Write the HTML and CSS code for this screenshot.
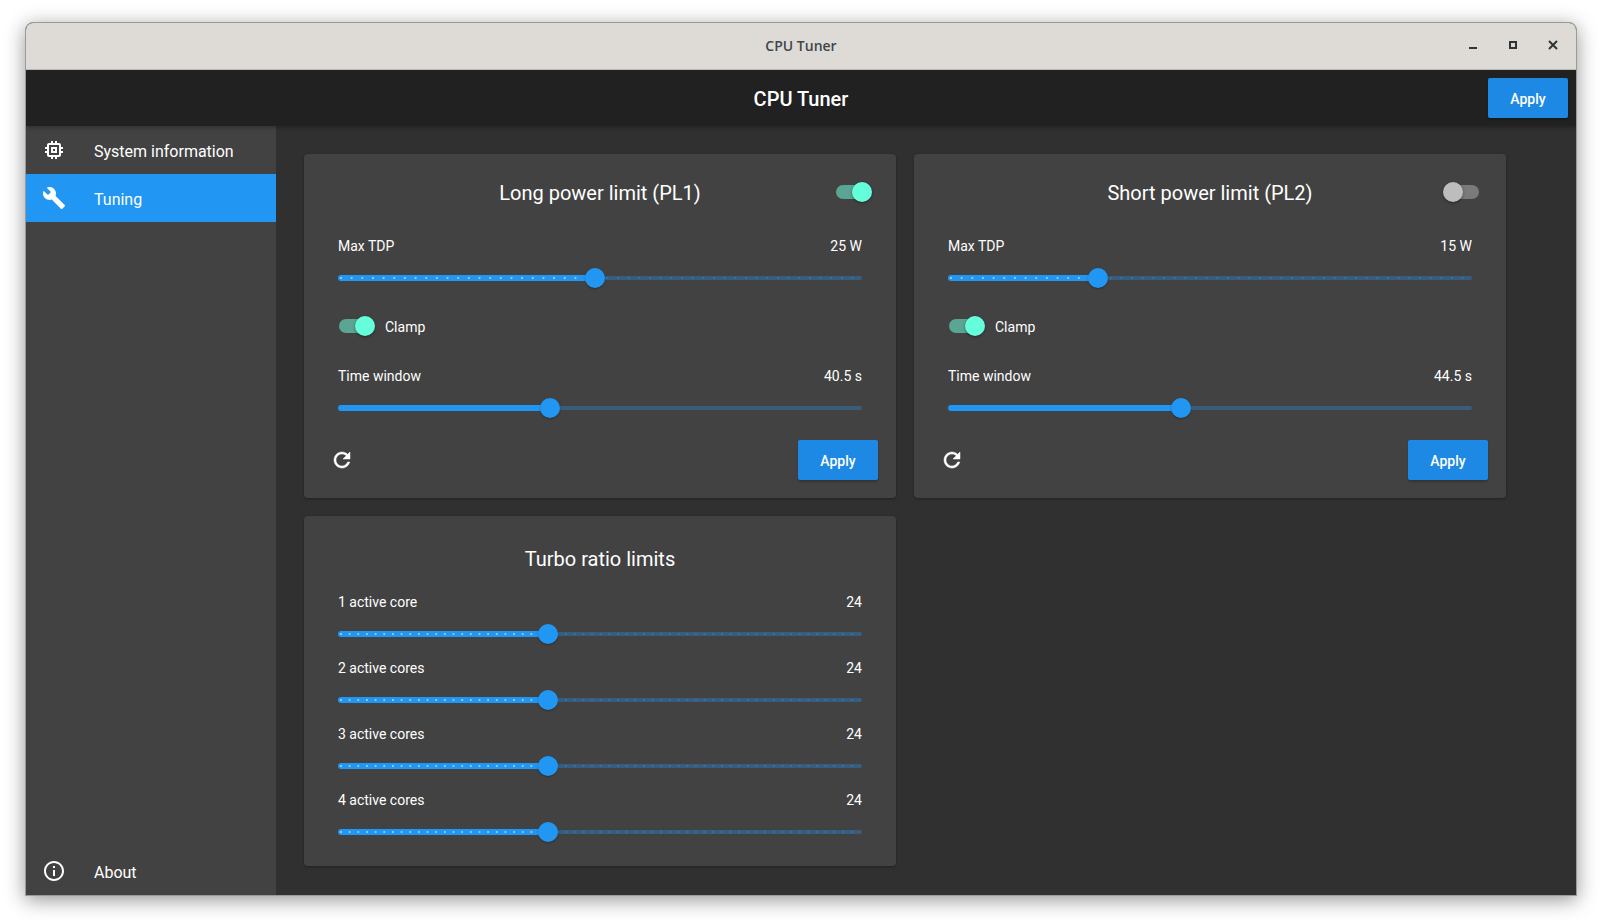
FILE: index.html
```html
<!DOCTYPE html>
<html lang="en">
<head>
<meta charset="utf-8">
<title>CPU Tuner</title>
<link rel="stylesheet" href="styles.css">
</head>
<body>
<div class="window">
  <header class="titlebar">
    <span class="titlebar-text">CPU Tuner</span>
    <div class="controls">
      <svg class="ctl" viewBox="0 0 12 12"><rect x="2" y="8" width="8" height="2" fill="#2e3436"/></svg>
      <svg class="ctl" viewBox="0 0 12 12"><path d="M2 2h8v8H2zM4 4v4h4V4z" fill="#2e3436" fill-rule="evenodd"/></svg>
      <svg class="ctl" viewBox="0 0 12 12"><path d="M2 2l8 8M10 2l-8 8" stroke="#2e3436" stroke-width="2" fill="none"/></svg>
    </div>
  </header>
  <div class="appbar">
    <h1 class="appbar-title">CPU Tuner</h1>
    <button class="btn appbar-btn">Apply</button>
  </div>
  <div class="body">
    <nav class="sidebar">
      <a class="nav-item">
        <svg class="icon" viewBox="0 0 24 24"><path d="M15 9H9v6h6V9zm-2 4h-2v-2h2v2zm8-2V9h-2V7c0-1.1-.9-2-2-2h-2V3h-2v2h-2V3H9v2H7c-1.1 0-2 .9-2 2v2H3v2h2v2H3v2h2v2c0 1.1.9 2 2 2h2v2h2v-2h2v2h2v-2h2c1.1 0 2-.9 2-2v-2h2v-2h-2v-2h2zm-4 6H7V7h10v10z"/></svg>
        <span>System information</span>
      </a>
      <a class="nav-item active">
        <svg class="icon" viewBox="0 0 24 24"><path d="M22.7 19l-9.1-9.1c.9-2.3.4-5-1.5-6.9-2-2-5-2.4-7.4-1.3L9 6 6 9 1.6 4.7C.4 7.1.9 10.1 2.9 12.1c1.9 1.9 4.6 2.4 6.9 1.5l9.1 9.1c.4.4 1 .4 1.4 0l2.3-2.3c.5-.4.5-1.1.1-1.4z"/></svg>
        <span>Tuning</span>
      </a>
      <a class="nav-item about">
        <svg class="icon" viewBox="0 0 24 24"><path d="M11 7h2v2h-2zm0 4h2v6h-2zm1-9C6.48 2 2 6.48 2 12s4.48 10 10 10 10-4.48 10-10S17.52 2 12 2zm0 18c-4.41 0-8-3.59-8-8s3.59-8 8-8 8 3.59 8 8-3.59 8-8 8z"/></svg>
        <span>About</span>
      </a>
    </nav>
    <main class="content">
      <section class="card">
        <div class="card-head">
          <h2 class="card-title">Long power limit (PL1)</h2>
          <span class="switch on head-switch"><i></i></span>
        </div>
        <div class="card-body">
          <div class="field">
            <div class="field-row"><span>Max TDP</span><span>25 W</span></div>
            <div class="slider"><div class="track dotted"><div class="fill" style="width:49%"></div><div class="thumb" style="left:49%"></div></div></div>
          </div>
          <div class="clamp"><span class="switch on"><i></i></span><span class="clamp-label">Clamp</span></div>
          <div class="field">
            <div class="field-row"><span>Time window</span><span>40.5 s</span></div>
            <div class="slider"><div class="track"><div class="fill" style="width:40.5%"></div><div class="thumb" style="left:40.5%"></div></div></div>
          </div>
        </div>
        <div class="actions">
          <span class="refresh"><svg class="icon refresh-icon" viewBox="0 0 24 24"><path d="M17.65 6.35C16.2 4.9 14.21 4 12 4c-4.42 0-7.99 3.58-7.99 8s3.57 8 7.99 8c3.73 0 6.84-2.55 7.73-6h-2.08c-.82 2.33-3.04 4-5.65 4-3.31 0-6-2.69-6-6s2.69-6 6-6c1.66 0 3.14.69 4.22 1.78L13 11h7V4l-2.35 2.35z"/></svg></span>
          <button class="btn">Apply</button>
        </div>
      </section>
      <section class="card">
        <div class="card-head">
          <h2 class="card-title">Short power limit (PL2)</h2>
          <span class="switch head-switch"><i></i></span>
        </div>
        <div class="card-body">
          <div class="field">
            <div class="field-row"><span>Max TDP</span><span>15 W</span></div>
            <div class="slider"><div class="track dotted"><div class="fill" style="width:28.6%"></div><div class="thumb" style="left:28.6%"></div></div></div>
          </div>
          <div class="clamp"><span class="switch on"><i></i></span><span class="clamp-label">Clamp</span></div>
          <div class="field">
            <div class="field-row"><span>Time window</span><span>44.5 s</span></div>
            <div class="slider"><div class="track"><div class="fill" style="width:44.5%"></div><div class="thumb" style="left:44.5%"></div></div></div>
          </div>
        </div>
        <div class="actions">
          <span class="refresh"><svg class="icon refresh-icon" viewBox="0 0 24 24"><path d="M17.65 6.35C16.2 4.9 14.21 4 12 4c-4.42 0-7.99 3.58-7.99 8s3.57 8 7.99 8c3.73 0 6.84-2.55 7.73-6h-2.08c-.82 2.33-3.04 4-5.65 4-3.31 0-6-2.69-6-6s2.69-6 6-6c1.66 0 3.14.69 4.22 1.78L13 11h7V4l-2.35 2.35z"/></svg></span>
          <button class="btn">Apply</button>
        </div>
      </section>
      <section class="card">
        <div class="card-head turbo-head">
          <h2 class="card-title">Turbo ratio limits</h2>
        </div>
        <div class="card-body">
          <div class="field">
            <div class="field-row"><span>1 active core</span><span>24</span></div>
            <div class="slider"><div class="track dotted turbo-track"><div class="fill" style="width:40%"></div><div class="thumb" style="left:40%"></div></div></div>
          </div>
          <div class="field">
            <div class="field-row"><span>2 active cores</span><span>24</span></div>
            <div class="slider"><div class="track dotted turbo-track"><div class="fill" style="width:40%"></div><div class="thumb" style="left:40%"></div></div></div>
          </div>
          <div class="field">
            <div class="field-row"><span>3 active cores</span><span>24</span></div>
            <div class="slider"><div class="track dotted turbo-track"><div class="fill" style="width:40%"></div><div class="thumb" style="left:40%"></div></div></div>
          </div>
          <div class="field">
            <div class="field-row"><span>4 active cores</span><span>24</span></div>
            <div class="slider"><div class="track dotted turbo-track"><div class="fill" style="width:40%"></div><div class="thumb" style="left:40%"></div></div></div>
          </div>
        </div>
      </section>
    </main>
  </div>
</div>
</body>
</html>
```
FILE: styles.css
```css
* { box-sizing: border-box; }
html, body { margin: 0; height: 100%; background: #fff; overflow: hidden; }
body { font-family: Roboto, "Liberation Sans", sans-serif; color: #fff; }

.window {
  margin: 22px 0 0 25px;
  width: 1552px;
  height: 874px;
  border: 1px solid #9a9a9a;
  border-radius: 8px 8px 0 0;
  display: flex;
  flex-direction: column;
  overflow: hidden;
  background: #303030;
  box-shadow: 0 4px 20px rgba(0,0,0,.42);
}

.titlebar {
  height: 47px;
  flex: none;
  display: flex;
  align-items: center;
  justify-content: center;
  position: relative;
  background: #dedbd7;
  border-bottom: 1px solid #c4c0ba;
}
.titlebar-text { font: 600 14px "Open Sans", sans-serif; color: #40464a; padding-bottom: 2px; }
.controls {
  position: absolute;
  right: 11px;
  top: 10px;
  display: flex;
  gap: 16px;
}
.ctl { width: 24px; height: 24px; padding: 6px; display: block; }

.appbar {
  height: 56px;
  flex: none;
  display: flex;
  align-items: center;
  justify-content: center;
  position: relative;
  background: #212121;
  box-shadow: 0 2px 4px rgba(0,0,0,.25);
  z-index: 2;
}
.appbar-title { margin: 0; padding-top: 2px; font-size: 20px; font-weight: 500; }
.appbar-btn { position: absolute; right: 8px; top: 8px; }

.btn {
  width: 80px;
  height: 40px;
  padding: 2px 0 0;
  border: 0;
  border-radius: 2px;
  background: #1e88e5;
  color: #fff;
  font: 500 14px Roboto, sans-serif;
  box-shadow: 0 2px 2px rgba(0,0,0,.2);
}

.body { flex: 1; display: flex; min-height: 0; }

.sidebar {
  width: 250px;
  flex: none;
  display: flex;
  flex-direction: column;
  background: #424242;
}
.nav-item {
  height: 48px;
  display: flex;
  align-items: center;
  gap: 28px;
  padding-left: 16px;
  font-size: 16px;
}
.nav-item span { padding-top: 2px; }
.nav-item.active { background: #2196f3; }
.nav-item.about { margin-top: auto; }
.icon { width: 24px; height: 24px; display: block; fill: #fff; flex: none; }
.refresh-icon { stroke: #fff; stroke-width: .5; }

.content {
  flex: 1;
  display: grid;
  grid-template-columns: 592px 592px;
  grid-template-rows: 344px 350px;
  gap: 18px;
  padding: 28px 0 0 28px;
  align-content: start;
}

.card {
  background: #424242;
  border-radius: 4px;
  box-shadow: 0 1px 3px rgba(0,0,0,.3);
  display: flex;
  flex-direction: column;
}
.card-head {
  height: 82px;
  padding-bottom: 4px;
  flex: none;
  display: flex;
  align-items: center;
  justify-content: center;
  position: relative;
}
.turbo-head { height: 76px; padding: 10px 0 0; }
.card-title { margin: 0; font-size: 20px; font-weight: 400; }

.card-body { padding: 0 34px; }
.field { margin-bottom: 2px; }
.field-row {
  height: 20px;
  display: flex;
  justify-content: space-between;
  align-items: center;
  font-size: 14px;
}
.slider { height: 44px; display: flex; align-items: center; }
.track {
  flex: 1;
  height: 4px;
  border-radius: 2px;
  background-color: #3a5c7a;
  position: relative;
}
.fill {
  position: absolute;
  left: 0;
  top: -1px;
  height: 6px;
  border-radius: 3px;
  background: #2196f3;
}
.dotted::after,
.dotted .fill::after {
  content: "";
  position: absolute;
  left: 2px;
  right: 2px;
  height: 2px;
  background-size: 10.67px 2px;
}
.dotted::after {
  top: 1px;
  background-image: linear-gradient(90deg, #1f76bb 2px, transparent 2px);
}
.dotted .fill::after {
  top: 2px;
  background-image: linear-gradient(90deg, #90caf9 2px, transparent 2px);
  z-index: 1;
}
.turbo-track::after,
.turbo-track .fill::after { background-size: 8.67px 2px; }
.thumb {
  position: absolute;
  top: 50%;
  width: 20px;
  height: 20px;
  margin: -10px 0 0 -10px;
  border-radius: 50%;
  background: #2196f3;
  box-shadow: 0 1px 2px rgba(0,0,0,.3);
  z-index: 2;
}

.switch {
  display: block;
  width: 34px;
  height: 14px;
  border-radius: 7px;
  background: #7a7a7a;
  position: relative;
  flex: none;
}
.switch i {
  position: absolute;
  left: -2px;
  top: -3px;
  width: 20px;
  height: 20px;
  border-radius: 50%;
  background: #bdbdbd;
  box-shadow: 0 1px 3px rgba(0,0,0,.4);
}
.switch.on { background: #5aa593; }
.switch.on i { left: 16px; background: #64ffda; }
.card-head .head-switch { position: absolute; right: 27px; top: 31px; }
.card-head .head-switch.on { right: 26px; }

.clamp {
  height: 48px;
  margin-bottom: 16px;
  padding-left: 1px;
  display: flex;
  align-items: center;
  gap: 12px;
  font-size: 14px;
}
.clamp-label { padding-top: 2px; }

.actions {
  margin-top: 8px;
  padding: 0 18px 0 14px;
  height: 40px;
  display: flex;
  align-items: center;
  justify-content: space-between;
}
.refresh { width: 48px; height: 48px; padding: 12px; flex: none; }
```
